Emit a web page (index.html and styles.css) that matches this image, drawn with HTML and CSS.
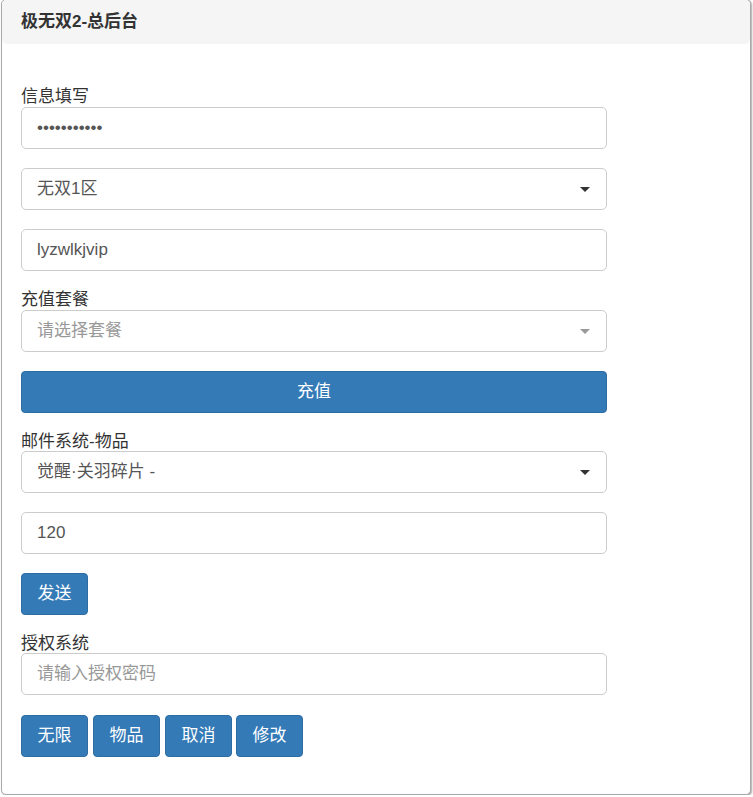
FILE: index.html
```html
<!DOCTYPE html>
<html lang="zh-CN">
<head>
<meta charset="utf-8">
<title>极无双2-总后台</title>
<link rel="stylesheet" href="styles.css">
</head>
<body>
<div class="panel">
  <div class="panel-heading">极无双2-总后台</div>
  <div class="panel-body">
    <div class="group">
      <label class="label">信息填写</label>
      <div class="control">•••••••••••</div>
    </div>
    <div class="group">
      <div class="control select">无双1区<span class="caret"></span></div>
    </div>
    <div class="group">
      <div class="control">lyzwlkjvip</div>
    </div>
    <div class="group">
      <label class="label">充值套餐</label>
      <div class="control select placeholder">请选择套餐<span class="caret"></span></div>
    </div>
    <div class="group">
      <button class="btn btn-block">充值</button>
    </div>
    <div class="group">
      <label class="label label-sm">邮件系统-物品</label>
      <div class="control select">觉醒·关羽碎片 -<span class="caret"></span></div>
    </div>
    <div class="group">
      <div class="control">120</div>
    </div>
    <div class="group">
      <button class="btn">发送</button>
    </div>
    <div class="group">
      <label class="label label-sm">授权系统</label>
      <div class="control placeholder">请输入授权密码</div>
    </div>
    <div class="btn-row">
      <button class="btn">无限</button>
      <button class="btn">物品</button>
      <button class="btn">取消</button>
      <button class="btn">修改</button>
    </div>
  </div>
</div>
</body>
</html>
```
FILE: styles.css
```css
html, body {
  margin: 0;
  padding: 0;
  background: #fff;
}
body {
  font-family: "Liberation Sans", "Noto Sans CJK SC", sans-serif;
  color: #333;
}
.panel {
  box-sizing: border-box;
  width: 750px;
  height: 796px;
  margin: -1px 0 0 1px;
  border: 1px solid #a9a9a9;
  border-radius: 5px;
  box-shadow: 1px 1px 2px rgba(0, 0, 0, 0.35);
  background: #fff;
  overflow: hidden;
}
.panel-heading {
  height: 44px;
  box-sizing: border-box;
  padding: 11px 19px 0;
  background: #f5f5f5;
  font-size: 17px;
  font-weight: bold;
  line-height: 22px;
  color: #333;
  border-radius: 4px 4px 5px 5px;
}
.panel-body {
  padding: 43px 143px 0 19px;
}
.group {
  margin-bottom: 19px;
}
.label {
  display: block;
  font-size: 17px;
  line-height: 20px;
  height: 20px;
  color: #333;
}
.label-sm {
  height: 19px;
  line-height: 19px;
}
.control {
  box-sizing: border-box;
  height: 42px;
  border: 1px solid #ccc;
  border-radius: 5px;
  padding: 0 15px;
  font-size: 17px;
  line-height: 40px;
  color: #555;
  display: flex;
  align-items: center;
  justify-content: space-between;
  background: #fff;
}
.placeholder {
  color: #999;
}
.caret {
  width: 0;
  height: 0;
  border-left: 5px solid transparent;
  border-right: 5px solid transparent;
  border-top: 5px solid #333;
  margin-right: 1px;
}
.placeholder .caret {
  border-top-color: #999;
}
.btn {
  display: block;
  box-sizing: border-box;
  height: 42px;
  width: 67px;
  padding: 0;
  border: 1px solid #2e6da4;
  border-radius: 4px;
  background: #337ab7;
  color: #fff;
  font-family: "Liberation Sans", "Noto Sans CJK SC", sans-serif;
  font-size: 17px;
  line-height: 40px;
  text-align: center;
  cursor: pointer;
}
.btn-block {
  width: 100%;
}
.btn-row {
  display: flex;
  gap: 5px;
  padding-top: 1px;
}
.btn-row .btn:nth-child(3) {
  margin-right: -1px;
}
```
